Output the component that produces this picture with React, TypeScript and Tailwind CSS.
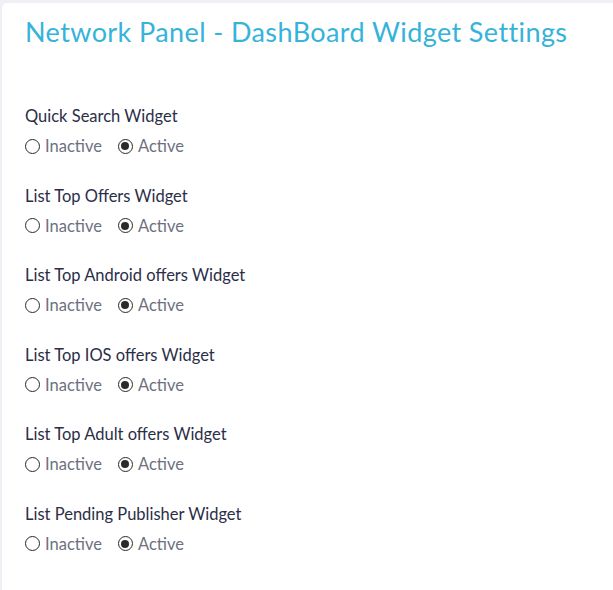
import React from "react";

const widgets = [
  "Quick Search Widget",
  "List Top Offers Widget",
  "List Top Android offers Widget",
  "List Top IOS offers Widget",
  "List Top Adult offers Widget",
  "List Pending Publisher Widget",
];

function Radio({ checked, label }: { checked: boolean; label: string }) {
  return (
    <label className="flex items-center gap-[5px]">
      <span className="flex h-[15px] w-[15px] items-center justify-center rounded-full border-[1.5px] border-[#2a2a2a] bg-white">
        {checked && <span className="h-[8px] w-[8px] rounded-full bg-[#2a2a2a]" />}
      </span>
      <span className="text-[16.5px] leading-[22px] text-[#6d7080]">{label}</span>
    </label>
  );
}

export default function App() {
  return (
    <div
      className="min-h-[590px] bg-[#eef0f5] pl-[2px] pt-[3px]"
      style={{ fontFamily: "Lato, 'Noto Sans', sans-serif" }}
    >
      <div className="min-h-[587px] rounded-tl-[5px] bg-white pl-[23px] pt-[11px]">
        <h1 className="text-[27px] leading-[36px] tracking-[0.4px] text-[#36b3d9]">
          Network Panel - DashBoard Widget Settings
        </h1>
        <div className="mt-[55px] flex flex-col gap-[27.6px]">
          {widgets.map((w) => (
            <div key={w} className="flex flex-col gap-[8px]">
              <div className="text-[16.5px] leading-[22px] text-[#2b2e47]">{w}</div>
              <div className="flex items-center gap-[16px]">
                <Radio checked={false} label="Inactive" />
                <Radio checked={true} label="Active" />
              </div>
            </div>
          ))}
        </div>
      </div>
    </div>
  );
}
